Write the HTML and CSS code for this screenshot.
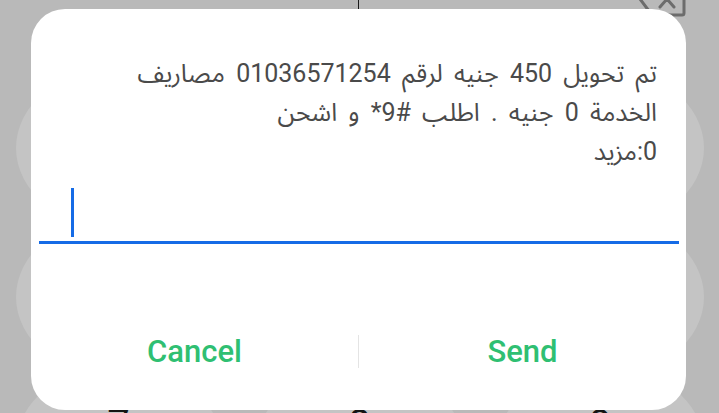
FILE: index.html
```html
<!DOCTYPE html>
<html lang="ar">
<head>
<meta charset="utf-8">
<title>USSD</title>
<link rel="stylesheet" href="styles.css">
</head>
<body>
<div class="screen">
  <div class="backdrop">
    <div class="top-rule"></div>
    <svg class="del-icon" viewBox="0 0 48 36" width="48" height="36" aria-hidden="true">
      <path d="M14 2 H44 a2 2 0 0 1 2 2 V32 a2 2 0 0 1 -2 2 H14 L2 18 Z" fill="none" stroke="#6c6c6c" stroke-width="3" stroke-linejoin="round"/>
      <path d="M22 10 L36 26 M36 10 L22 26" stroke="#6c6c6c" stroke-width="3" stroke-linecap="round"/>
    </svg>
    <div class="keypad">
      <div class="key"></div>
      <div class="key"></div>
      <div class="key"></div>
      <div class="key"></div>
      <div class="key"></div>
      <div class="key"></div>
      <div class="key"><span class="digit">7</span></div>
      <div class="key"><span class="digit">8</span></div>
      <div class="key"><span class="digit">9</span></div>
    </div>
  </div>

  <div class="dialog" role="dialog">
    <p class="message" dir="rtl">تم تحويل 450 جنيه لرقم 01036571254 مصاريف<br>الخدمة 0 جنيه . اطلب #9* و اشحن<br>0:مزيد</p>
    <div class="field">
      <span class="caret"></span>
    </div>
    <div class="actions">
      <button class="action">Cancel</button>
      <span class="sep"></span>
      <button class="action">Send</button>
    </div>
  </div>
</div>
</body>
</html>
```
FILE: styles.css
```css
* { box-sizing: border-box; }

html, body {
  margin: 0;
  padding: 0;
}

body {
  width: 719px;
  height: 413px;
  overflow: hidden;
  background: #b9b9b9;
  font-family: Roboto, "Noto Sans Arabic", "DejaVu Sans", sans-serif;
}

.screen {
  position: relative;
  width: 719px;
  height: 413px;
  overflow: hidden;
}

.backdrop {
  position: absolute;
  inset: 0;
}

.top-rule {
  position: absolute;
  left: 358px;
  top: 0;
  width: 1px;
  height: 12px;
  background: #1a1a1a;
}

.del-icon {
  position: absolute;
  left: 638px;
  top: -19px;
}

.keypad {
  position: absolute;
  left: -2px;
  top: 73px;
  width: 723px;
  display: grid;
  grid-template-columns: repeat(3, 241px);
  grid-auto-rows: 149px;
}

.key {
  justify-self: center;
  align-self: center;
  width: 206px;
  height: 162px;
  border-radius: 50%;
  background: #c4c4c4;
  display: flex;
  justify-content: center;
  padding-top: 40px;
}

.digit {
  font-family: Roboto, sans-serif;
  font-size: 40px;
  line-height: 40px;
  color: #141414;
}

.dialog {
  position: absolute;
  left: 31px;
  top: 9px;
  width: 655px;
  height: 401px;
  background: #ffffff;
  border-radius: 34px;
  display: flex;
  flex-direction: column;
}

.message {
  margin: 0;
  padding: 45px 29px 0 20px;
  font-family: Roboto, "Noto Sans Arabic", "DejaVu Sans", sans-serif;
  font-size: 25px;
  line-height: 39px;
  word-spacing: 5px;
  color: #4a4a4a;
  text-align: right;
  white-space: nowrap;
}

.field {
  margin: 17px 7px 0 8px;
  height: 56px;
  border-bottom: 3px solid #156be6;
  padding-left: 32px;
  display: flex;
  align-items: flex-start;
}

.caret {
  width: 3px;
  height: 49px;
  background: #156be6;
}

.actions {
  margin-top: 74px;
  height: 66px;
  display: flex;
  align-items: center;
}

.action {
  flex: 1;
  border: 0;
  background: transparent;
  padding: 0;
  font-family: Roboto, sans-serif;
  font-weight: 500;
  font-size: 31px;
  color: #2fbf72;
  text-align: center;
}

.sep {
  width: 1px;
  height: 33px;
  background: #e4e4e4;
}
```
